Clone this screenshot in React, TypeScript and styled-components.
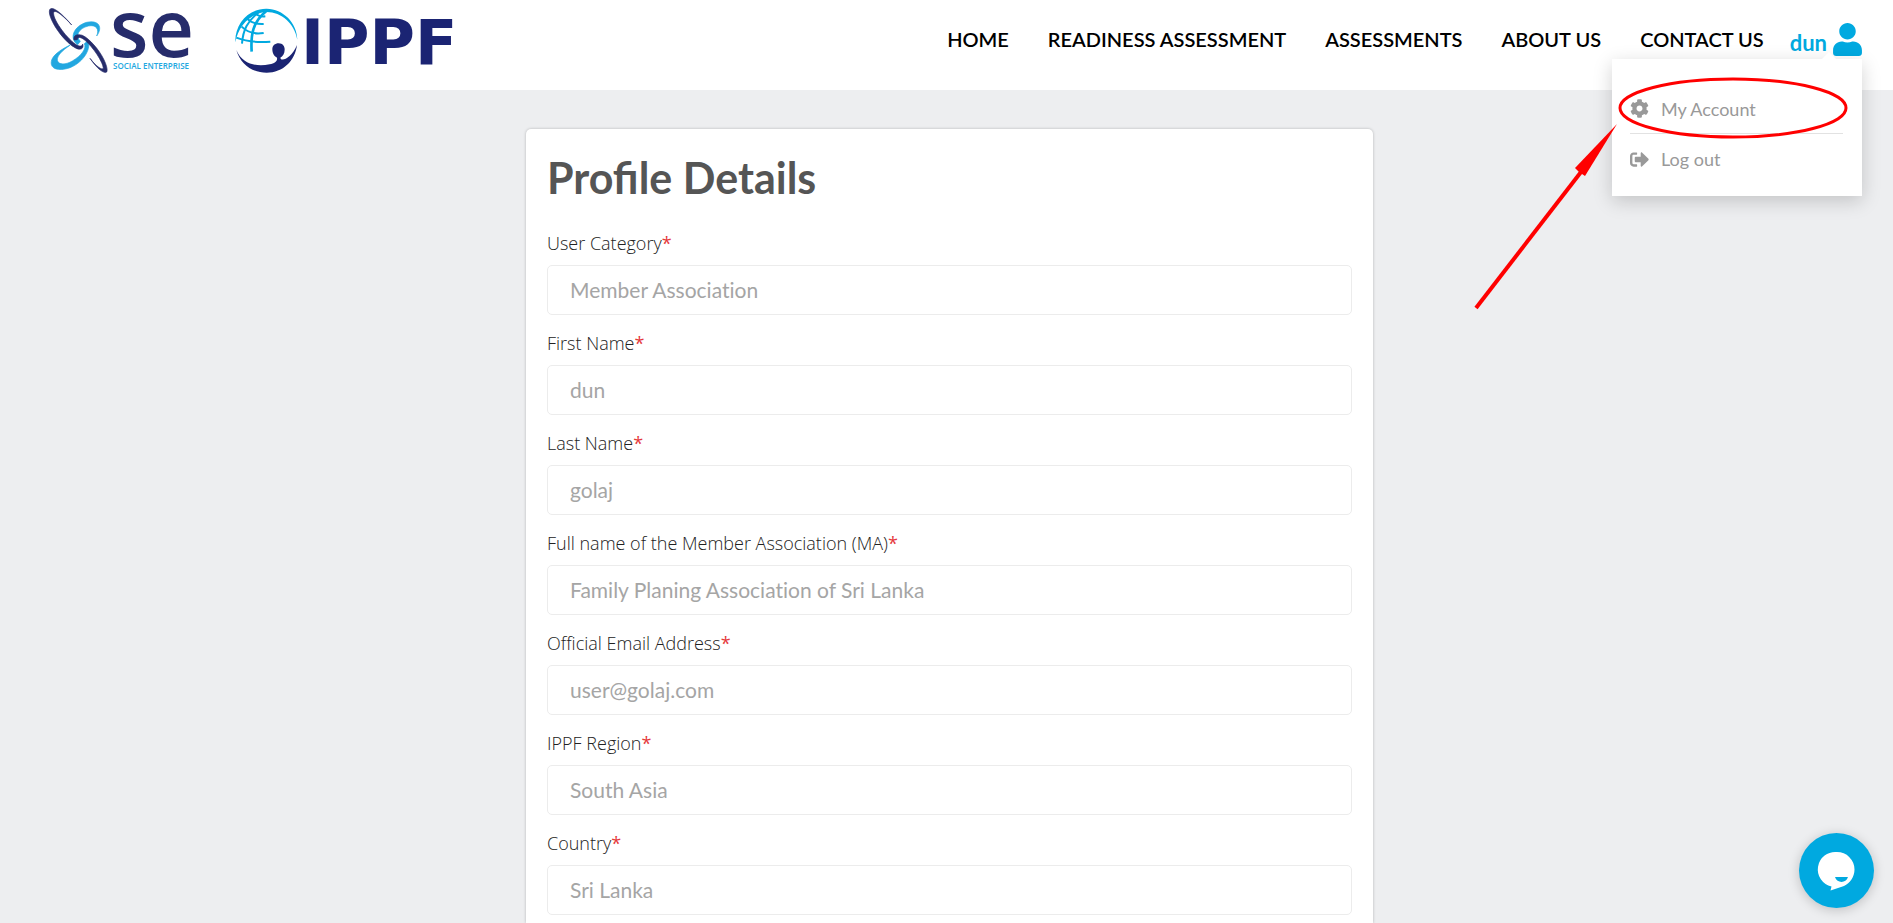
import React from 'react';
import styled, { createGlobalStyle } from 'styled-components';
import { FaCog, FaSignOutAlt, FaUser } from 'react-icons/fa';

const GlobalStyle = createGlobalStyle`
  *, *::before, *::after { box-sizing: border-box; }
  body { margin: 0; background: #edeef0; font-family: Lato, sans-serif; color: #333; }
`;

const Page = styled.div`
  display: flex;
  flex-direction: column;
  min-height: 100vh;
`;

const Header = styled.header`
  display: flex;
  align-items: center;
  justify-content: space-between;
  height: 90px;
  padding: 0 31px 12px 45px;
  background: #fff;
`;

const Brands = styled.div`
  display: flex;
  gap: 38px;
`;

const BrandLink = styled.a`
  display: block;
  height: 72px;

  svg { display: block; overflow: visible; }
`;

const HeaderRight = styled.div`
  display: flex;
  align-items: center;
  gap: 26px;
`;

const Nav = styled.nav`
  display: flex;
  gap: 39px;
`;

const NavLink = styled.a`
  font-size: 20px;
  font-weight: 600;
  line-height: 24px;
  color: #000;
  text-decoration: none;
  white-space: nowrap;
`;

const UserMenu = styled.div`
  position: relative;
`;

const UserButton = styled.button`
  display: flex;
  align-items: center;
  gap: 6px;
  padding: 0;
  border: 0;
  background: none;
  color: #00a9e0;
  cursor: pointer;
`;

const UserName = styled.span`
  padding-top: 7px;
  font: 700 22px/26px Lato, sans-serif;
`;

const UserIcon = styled(FaUser)`
  width: 29px;
  height: 33px;
`;

const Dropdown = styled.div`
  position: absolute;
  top: 36px;
  right: 0;
  width: 250px;
  padding: 24px 19px 13px 18px;
  background: #fff;
  box-shadow: 0 5px 18px rgba(0, 0, 0, 0.18);

  &::before {
    content: '';
    position: absolute;
    top: -7px;
    right: 26px;
    border: solid transparent;
    border-width: 0 7px 7px;
    border-bottom-color: #fff;
  }
`;

const MenuItem = styled.a`
  display: flex;
  align-items: center;
  gap: 12px;
  height: 50px;
  padding-top: 2px;
  font-size: 18px;
  color: #999;
  text-decoration: none;

  & + & { border-top: 1px solid #e2e2e2; }
  svg { width: 19px; height: 19px; }
`;

const Highlight = styled.svg`
  position: absolute;
  top: 11px;
  left: -140px;
  pointer-events: none;
`;

const Main = styled.main`
  display: flex;
  flex: 1;
  justify-content: center;
  padding: 39px 20px 0 26px;
`;

const Card = styled.form`
  width: 100%;
  max-width: 847px;
  padding: 23px 21px 6px;
  border-radius: 5px 5px 0 0;
  background: #fff;
  box-shadow: 0 0 3px rgba(0, 0, 0, 0.25);
`;

const Title = styled.h1`
  margin: 0 0 27px;
  font-size: 43px;
  font-weight: 700;
  line-height: 52px;
  color: #555;
`;

const Field = styled.div`
  display: flex;
  flex-direction: column;
  gap: 10px;
  font-variant-ligatures: none;

  & + & { margin-top: 16px; }
`;

const Label = styled.label`
  font-family: 'Open Sans', sans-serif;
  font-size: 18px;
  font-weight: 300;
  line-height: 24px;
  color: #222;
`;

const Required = styled.span`
  font-weight: 400;
  color: #e5383b;
`;

const Input = styled.input`
  width: 100%;
  height: 50px;
  padding: 0 22px 2px;
  border: 1px solid #ececec;
  border-radius: 5px;
  background: #fff;
  font-family: Lato, sans-serif;
  font-size: 21px;
  font-variant-ligatures: none;
  color: #a5a5a5;
`;

const ChatButton = styled.button`
  position: fixed;
  right: 19px;
  bottom: 15px;
  width: 75px;
  height: 75px;
  padding: 0;
  border: 0;
  border-radius: 50%;
  background: #00a9e0;
  box-shadow: 0 2px 12px rgba(0, 0, 0, 0.2);
  cursor: pointer;

  svg { display: block; }
`;

const NAVY = '#262c6b';
const CYAN = '#22a7e0';

const SocialEnterpriseLogo = () => (
  <svg width="150" height="72" viewBox="0 0 150 72" role="img" aria-label="Social Enterprise">
    <g transform="translate(0 2) scale(0.3333)" strokeWidth="2">
      <path fill={NAVY} stroke={NAVY} d="M80 60C55 30 22 0 14 14C6 35 50 105 90 128C105 137 118 132 113 117C112 124 104 126 92 118C60 95 22 40 26 22C30 12 55 32 80 60Z" />
      <path fill={CYAN} stroke={CYAN} d="M98 119C72 102 84 64 125 52C163 44 174 68 155 93C164 72 153 58 130 63C100 70 90 92 106 109Z" />
      <path fill={CYAN} stroke={CYAN} d="M128 108C140 125 120 170 75 188C40 200 12 192 20 165C26 148 50 132 76 120C50 138 36 152 37 166C40 180 62 180 82 168C108 153 126 130 118 116Z" />
      <path fill={NAVY} stroke={NAVY} d="M87 105C84 90 98 86 112 91C125 97 135 107 147 120C170 145 190 185 186 200C178 209 155 190 135 160C158 190 174 196 175 189C174 172 145 127 120 106C108 96 98 94 97 104Z" />
    </g>
    <text x="65" y="54" fill={NAVY} fontFamily="'Open Sans', sans-serif" fontSize="79" fontWeight="600">se</text>
    <text x="68" y="66" fill={CYAN} fontFamily="'Open Sans', sans-serif" fontSize="8" fontWeight="600">SOCIAL ENTERPRISE</text>
  </svg>
);

const IppfLogo = () => (
  <svg width="225" height="72" viewBox="0 0 225 72" role="img" aria-label="IPPF">
    <g transform="translate(0 2) scale(0.3333)">
      <g fill="none" stroke="#00a9e0" strokeWidth="6">
        <path d="M100 18C58 52 53 90 56 140" strokeWidth="8" />
        <path d="M82 18C42 48 30 76 27 116" />
        <path d="M42 40C55 54 72 58 92 57" />
        <path d="M26 65C45 84 68 88 92 84" />
        <path d="M10 98C45 112 75 113 112 110" />
        <path d="M66 24C74 32 84 36 97 34" />
      </g>
      <path fill="#00a9e0" d="M7 112C5 55 48 10 101 11C150 12 192 52 193 104C184 55 146 21 101 21C56 22 16 60 7 112Z" />
      <path fill="#1b2473" d="M10 135C28 178 70 186 110 178C125 174 134 170 132 158C125 155 118 146 118 133C118 122 126 115 137 115C149 115 155 124 155 134C155 146 149 154 142 158C144 172 175 160 192 120C186 168 150 203 101 203C58 203 22 178 10 135Z" />
    </g>
    <text x="68" y="61" fill="#1b2473" fontFamily="'DejaVu Sans', sans-serif" fontSize="62" fontWeight="700">IPPF</text>
  </svg>
);

const NAV_ITEMS = ['Home', 'Readiness Assessment', 'Assessments', 'About us', 'Contact us'];

const FIELDS = [
  { id: 'category', label: 'User Category', value: 'Member Association' },
  { id: 'first-name', label: 'First Name', value: 'dun' },
  { id: 'last-name', label: 'Last Name', value: 'golaj' },
  { id: 'association', label: 'Full name of the Member Association (MA)', value: 'Family Planing Association of Sri Lanka' },
  { id: 'email', label: 'Official Email Address', value: 'user@golaj.com' },
  { id: 'region', label: 'IPPF Region', value: 'South Asia' },
  { id: 'country', label: 'Country', value: 'Sri Lanka' },
];

export default function App() {
  return (
    <Page>
      <GlobalStyle />
      <Header>
        <Brands>
          <BrandLink href="#"><SocialEnterpriseLogo /></BrandLink>
          <BrandLink href="#"><IppfLogo /></BrandLink>
        </Brands>
        <HeaderRight>
          <Nav>
            {NAV_ITEMS.map((item) => (
              <NavLink key={item} href="#">{item.toUpperCase()}</NavLink>
            ))}
          </Nav>
          <UserMenu>
            <UserButton type="button" aria-expanded="true">
              <UserName>dun</UserName>
              <UserIcon aria-hidden="true" />
            </UserButton>
            <Dropdown>
              <MenuItem href="#"><FaCog aria-hidden="true" />My Account</MenuItem>
              <MenuItem href="#"><FaSignOutAlt aria-hidden="true" />Log out</MenuItem>
              <Highlight width="380" height="245" viewBox="0 0 380 245" aria-hidden="true">
                <ellipse cx="261" cy="38" rx="113" ry="29" fill="none" stroke="#f00" strokeWidth="3" />
                <path d="M4 238L109 102" stroke="#f00" strokeWidth="4" />
                <path d="M145 54L103 98L107 102L113 106Z" fill="#f00" />
              </Highlight>
            </Dropdown>
          </UserMenu>
        </HeaderRight>
      </Header>
      <Main>
        <Card>
          <Title>Profile Details</Title>
          {FIELDS.map((field) => (
            <Field key={field.id}>
              <Label htmlFor={field.id}>{field.label}<Required>*</Required></Label>
              <Input id={field.id} defaultValue={field.value} readOnly />
            </Field>
          ))}
        </Card>
      </Main>
      <ChatButton type="button" aria-label="Open chat">
        <svg width="75" height="75" viewBox="0 0 75 75" aria-hidden="true">
          <path fill="#fff" d="M38 19A17.500 17.500 0 0 1 55.500 36.500C55.500 44 51 50 45 53L31.500 57.500L32.500 53.500A17.500 17.500 0 0 1 38 19Z" />
          <path fill="#00a9e0" d="M36 44H49C47 50.500 38 50.500 36 44Z" />
        </svg>
      </ChatButton>
    </Page>
  );
}
